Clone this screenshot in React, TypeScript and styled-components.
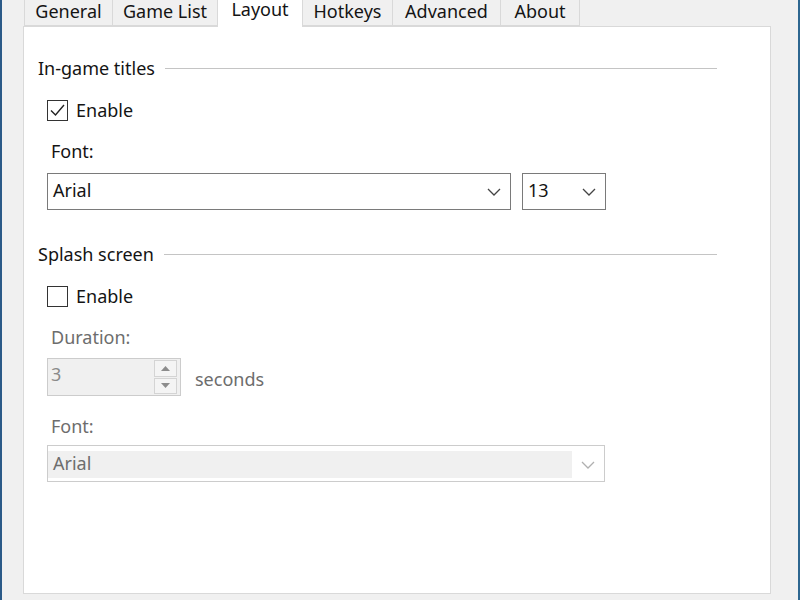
import React, { useState } from "react";
import styled, { createGlobalStyle } from "styled-components";

const GlobalStyle = createGlobalStyle`
  html, body {
    margin: 0;
    padding: 0;
    background: #f0f0f0;
  }
  * {
    box-sizing: border-box;
  }
`;

const Window = styled.div`
  width: 800px;
  height: 600px;
  overflow: hidden;
  display: flex;
  flex-direction: column;
  padding-left: 21px;
  background: #f0f0f0;
  border-left: 2px solid #2b5a88;
  border-right: 2px solid #2d6690;
  font-family: "Noto Sans", "Open Sans", sans-serif;
  font-size: 18px;
  color: #141414;
`;

const TabStrip = styled.div`
  display: flex;
  align-items: flex-end;
  height: 26px;
  padding-left: 2px;
  position: relative;
  z-index: 1;
`;

const Tab = styled.div<{ $width: number; $active?: boolean }>`
  width: ${(p) => p.$width}px;
  height: ${(p) => (p.$active ? 36 : 33)}px;
  margin-bottom: ${(p) => (p.$active ? -1 : 0)}px;
  margin-left: -1px;
  display: flex;
  justify-content: center;
  align-items: flex-start;
  padding-top: 5px;
  line-height: 24px;
  border: 1px solid #d9d9d9;
  border-bottom: ${(p) => (p.$active ? "none" : "1px solid #d9d9d9")};
  background: ${(p) => (p.$active ? "#ffffff" : "#f0f0f0")};
  color: #141414;
  white-space: nowrap;
  cursor: default;
  position: relative;
  z-index: ${(p) => (p.$active ? 2 : 1)};
`;

const Panel = styled.div`
  width: 748px;
  height: 568px;
  background: #ffffff;
  border: 1px solid #d9d9d9;
  padding: 30px 53px 0 14px;
  display: flex;
  flex-direction: column;
`;

const GroupHeader = styled.div<{ $gap?: number }>`
  display: flex;
  align-items: center;
  gap: 10px;
  height: 24px;
  line-height: 24px;
  padding-bottom: 2px;
  margin-top: ${(p) => p.$gap ?? 0}px;
`;

const GroupLine = styled.div`
  flex: 1;
  height: 1px;
  background: #c4c4c4;
`;

const GroupBody = styled.div`
  display: flex;
  flex-direction: column;
  padding-left: 9px;
`;

const CheckRow = styled.label`
  display: flex;
  align-items: center;
  gap: 8px;
  height: 21px;
  margin-top: 19px;
  cursor: default;
`;

const CheckText = styled.span`
  margin-top: -2px;
`;

const CheckBox = styled.span`
  width: 21px;
  height: 21px;
  border: 1px solid #333333;
  background: #ffffff;
  display: flex;
  align-items: center;
  justify-content: center;
`;

const FieldLabel = styled.div<{ $disabled?: boolean; $gap: number }>`
  height: 24px;
  line-height: 22px;
  padding-left: 4px;
  margin-top: ${(p) => p.$gap}px;
  color: ${(p) => (p.$disabled ? "#6d6d6d" : "#141414")};
`;

const FieldRow = styled.div<{ $gap: number }>`
  display: flex;
  align-items: center;
  gap: 11px;
  margin-top: ${(p) => p.$gap}px;
`;

const Combo = styled.div<{ $width: number; $disabled?: boolean }>`
  width: ${(p) => p.$width}px;
  height: 37px;
  display: flex;
  align-items: stretch;
  border: 1px solid ${(p) => (p.$disabled ? "#cccccc" : "#7a7a7a")};
  background: #ffffff;
  padding: ${(p) => (p.$disabled ? "5px 0 3px 0" : "0")};
`;

const ComboText = styled.div<{ $disabled?: boolean }>`
  flex: 1;
  display: flex;
  align-items: center;
  padding-left: 5px;
  padding-bottom: 3px;
  background: ${(p) => (p.$disabled ? "#f0f0f0" : "transparent")};
  color: ${(p) => (p.$disabled ? "#6d6d6d" : "#141414")};
`;

const ComboArrow = styled.div`
  width: 32px;
  display: flex;
  align-items: center;
  justify-content: center;
`;

const SpinBox = styled.div`
  width: 134px;
  height: 38px;
  display: flex;
  border: 1px solid #cccccc;
  background: #f0f0f0;
  padding: 1px 3px 1px 0;
`;

const SpinValue = styled.div`
  flex: 1;
  display: flex;
  align-items: center;
  padding-left: 3px;
  padding-bottom: 6px;
  color: #8a8a8a;
`;

const SpinButtons = styled.div`
  width: 23px;
  display: flex;
  flex-direction: column;
  gap: 1px;
`;

const SpinButton = styled.div`
  flex: 1;
  display: flex;
  align-items: center;
  justify-content: center;
  border: 1px solid #d4d4d4;
  background: #f4f4f4;
`;

const Unit = styled.span`
  color: #6d6d6d;
  margin-left: 3px;
  margin-top: 3px;
`;

const Chevron = ({ color }: { color: string }) => (
  <svg width="14" height="8" viewBox="0 0 14 8">
    <polyline points="1,1 7,7 13,1" fill="none" stroke={color} strokeWidth="1.3" />
  </svg>
);

const Triangle = ({ up }: { up?: boolean }) => (
  <svg width="9" height="5" viewBox="0 0 9 5">
    <polygon points={up ? "0,5 4.5,0 9,5" : "0,0 4.5,5 9,0"} fill="#8c8c8c" />
  </svg>
);

const CheckMark = () => (
  <svg width="17" height="17" viewBox="0 0 17 17">
    <polyline points="2,8.5 6.5,13 15,3" fill="none" stroke="#222222" strokeWidth="1.4" />
  </svg>
);

const tabs = [
  { name: "General", width: 89 },
  { name: "Game List", width: 106 },
  { name: "Layout", width: 86 },
  { name: "Hotkeys", width: 91 },
  { name: "Advanced", width: 109 },
  { name: "About", width: 80 },
];

const App = () => {
  const [titlesEnabled, setTitlesEnabled] = useState<boolean>(true);
  const [splashEnabled, setSplashEnabled] = useState<boolean>(false);

  return (
    <>
      <GlobalStyle />
      <Window>
        <TabStrip>
          {tabs.map((t) => (
            <Tab key={t.name} $width={t.width} $active={t.name === "Layout"}>
              {t.name}
            </Tab>
          ))}
        </TabStrip>
        <Panel>
          {/* In-game titles */}
          <GroupHeader>
            In-game titles
            <GroupLine />
          </GroupHeader>
          <GroupBody>
            <CheckRow onClick={() => setTitlesEnabled(!titlesEnabled)}>
              <CheckBox>{titlesEnabled && <CheckMark />}</CheckBox>
              <CheckText>Enable</CheckText>
            </CheckRow>
            <FieldLabel $gap={19}>Font:</FieldLabel>
            <FieldRow $gap={9}>
              <Combo $width={464}>
                <ComboText>Arial</ComboText>
                <ComboArrow>
                  <Chevron color="#444444" />
                </ComboArrow>
              </Combo>
              <Combo $width={84}>
                <ComboText>13</ComboText>
                <ComboArrow>
                  <Chevron color="#444444" />
                </ComboArrow>
              </Combo>
            </FieldRow>
          </GroupBody>

          {/* Splash screen */}
          <GroupHeader $gap={33}>
            Splash screen
            <GroupLine />
          </GroupHeader>
          <GroupBody>
            <CheckRow onClick={() => setSplashEnabled(!splashEnabled)}>
              <CheckBox>{splashEnabled && <CheckMark />}</CheckBox>
              <CheckText>Enable</CheckText>
            </CheckRow>
            <FieldLabel $gap={19} $disabled>
              Duration:
            </FieldLabel>
            <FieldRow $gap={8}>
              <SpinBox>
                <SpinValue>3</SpinValue>
                <SpinButtons>
                  <SpinButton>
                    <Triangle up />
                  </SpinButton>
                  <SpinButton>
                    <Triangle />
                  </SpinButton>
                </SpinButtons>
              </SpinBox>
              <Unit>seconds</Unit>
            </FieldRow>
            <FieldLabel $gap={19} $disabled>
              Font:
            </FieldLabel>
            <FieldRow $gap={6}>
              <Combo $width={558} $disabled>
                <ComboText $disabled>Arial</ComboText>
                <ComboArrow>
                  <Chevron color="#b0b0b0" />
                </ComboArrow>
              </Combo>
            </FieldRow>
          </GroupBody>
        </Panel>
      </Window>
    </>
  );
};

export default App;
